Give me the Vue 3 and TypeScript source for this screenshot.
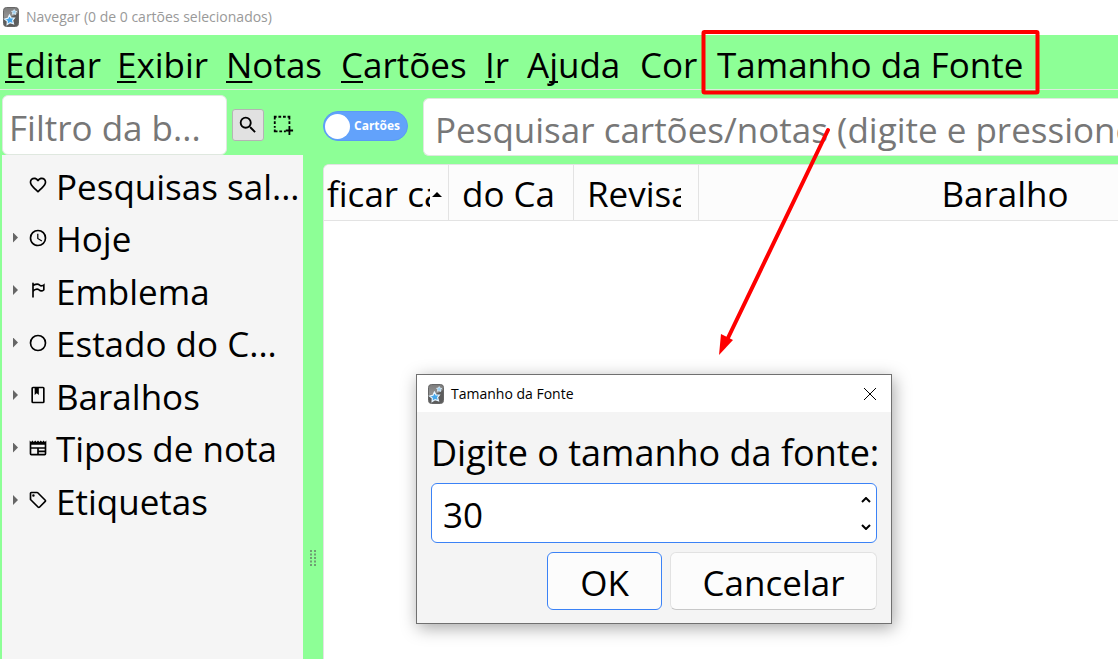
<script setup lang="ts">
import { ref } from 'vue'

interface MenuEntry {
  before: string
  key: string
  after: string
}

interface TreeRow {
  label: string
  icon: string
  expandable: boolean
}

const menus: MenuEntry[] = [
  { before: '', key: 'E', after: 'ditar' },
  { before: '', key: 'E', after: 'xibir' },
  { before: '', key: 'N', after: 'otas' },
  { before: '', key: 'C', after: 'artões' },
  { before: '', key: 'I', after: 'r' },
  { before: 'A', key: 'j', after: 'uda' },
  { before: 'Cor', key: '', after: '' },
  { before: 'Tamanho da Fonte', key: '', after: '' },
]

const rows: TreeRow[] = [
  {
    label: 'Pesquisas sal...',
    expandable: false,
    icon: 'M12.1,18.55L12,18.65L11.89,18.55C7.14,14.24 4,11.39 4,8.5C4,6.5 5.5,5 7.5,5C9.04,5 10.54,6 11.07,7.36H12.93C13.46,6 14.96,5 16.5,5C18.5,5 20,6.5 20,8.5C20,11.39 16.86,14.24 12.1,18.55M16.5,3C14.76,3 13.09,3.81 12,5.08C10.91,3.81 9.24,3 7.5,3C4.42,3 2,5.41 2,8.5C2,12.27 5.4,15.36 10.55,20.03L12,21.35L13.45,20.03C18.6,15.36 22,12.27 22,8.5C22,5.41 19.58,3 16.5,3Z',
  },
  {
    label: 'Hoje',
    expandable: true,
    icon: 'M12,20A8,8 0 0,0 20,12A8,8 0 0,0 12,4A8,8 0 0,0 4,12A8,8 0 0,0 12,20M12,2A10,10 0 0,1 22,12A10,10 0 0,1 12,22C6.47,22 2,17.5 2,12A10,10 0 0,1 12,2M12.5,7V12.25L17,14.92L16.25,16.15L11,13V7H12.5Z',
  },
  {
    label: 'Emblema',
    expandable: true,
    icon: 'M6,3A1,1 0 0,1 7,4V4.88C8.06,4.44 9.5,4 11,4C14,4 14,6 16,6C19,6 20,4 20,4V12C20,12 19,14 16,14C13,14 13,12 11,12C8,12 7,14 7,14V21H5V4A1,1 0 0,1 6,3M7,7.25V11.5C7,11.5 9,10 11,10C13,10 14,12 16,12C18,12 18,11 18,11V7.5C18,7.5 17,8 16,8C14,8 13,6 11,6C9,6 7,7.25 7,7.25Z',
  },
  {
    label: 'Estado do C...',
    expandable: true,
    icon: 'M12,20A8,8 0 0,1 4,12A8,8 0 0,1 12,4A8,8 0 0,1 20,12A8,8 0 0,1 12,20M12,2A10,10 0 0,0 2,12A10,10 0 0,0 12,22A10,10 0 0,0 22,12A10,10 0 0,0 12,2Z',
  },
  {
    label: 'Baralhos',
    expandable: true,
    icon: 'M18,2A2,2 0 0,1 20,4V20A2,2 0 0,1 18,22H6A2,2 0 0,1 4,20V4A2,2 0 0,1 6,2H18M18,4H13V12L10.5,9.75L8,12V4H6V20H18V4Z',
  },
  {
    label: 'Tipos de nota',
    expandable: true,
    icon: 'M2,3L3.67,4.67L5.33,3L7,4.67L8.67,3L10.33,4.67L12,3L13.67,4.67L15.33,3L17,4.67L18.67,3L20.33,4.67L22,3V19A2,2 0 0,1 20,21H4A2,2 0 0,1 2,19V3M11,19V13H4V19H11M20,19V17H13V19H20M20,15V13H13V15H20M20,11V8H4V11H20Z',
  },
  {
    label: 'Etiquetas',
    expandable: true,
    icon: 'M21.41,11.58L12.41,2.58A2,2 0 0,0 11,2H4A2,2 0 0,0 2,4V11A2,2 0 0,0 2.59,12.42L11.59,21.42A2,2 0 0,0 13,22A2,2 0 0,0 14.41,21.41L21.41,14.41A2,2 0 0,0 22,13A2,2 0 0,0 21.41,11.58M13,20L4,11V4H11L20,13M6.5,5A1.5,1.5 0 1,1 5,6.5A1.5,1.5 0 0,1 6.5,5Z',
  },
]

const size = ref('30')
const step = (delta: number): void => {
  size.value = String(Number(size.value) + delta)
}
</script>

<template>
  <div class="window">
    <svg class="defs" width="0" height="0" aria-hidden="true">
      <defs>
        <linearGradient id="tile" x1="0" y1="0" x2="0" y2="1">
          <stop offset="0" stop-color="#7c7c7c" />
          <stop offset="0.45" stop-color="#929292" />
          <stop offset="1" stop-color="#858585" />
        </linearGradient>
        <symbol id="app-icon" viewBox="0 0 16 20">
          <rect x="0.5" y="0.5" width="15" height="19" rx="3" fill="url(#tile)" stroke="#666" />
          <path d="M1 11C6 11 11 9 15 6V16Q15 19 13 19H3Q1 19 1 16Z" fill="#5c5c5c" />
          <path d="M6.4 8L8 10.8L11.4 11L9.6 13.4L10.5 16.8L7.2 15.6L4.1 17.6L4.3 14.2L1.6 12.1L5 11.2Z" fill="#46a8ec" stroke="#e8f5ff" stroke-width="1.2" />
          <path d="M11.2 2.6L12.1 4.2L13.8 4.5L12.5 5.7L12.7 7.5L11 6.7L9.4 7.3L9.7 5.6L8.6 4.2L10.4 4.1Z" fill="#9ad0f2" stroke="#dff0fb" stroke-width="0.8" />
        </symbol>
      </defs>
    </svg>

    <header class="titlebar">
      <svg class="app-icon" aria-hidden="true"><use href="#app-icon" /></svg>
      <span>Navegar (0 de 0 cartões selecionados)</span>
    </header>

    <nav class="menubar">
      <button v-for="m in menus" :key="m.before + m.key + m.after" type="button" class="menu">{{ m.before }}<span class="mnemonic">{{ m.key }}</span>{{ m.after }}</button>
    </nav>

    <div class="body">
      <aside class="sidebar">
        <div class="sidebar-tools">
          <input class="filter" type="text" placeholder="Filtro da b..." aria-label="Filtro da barra lateral" />
          <button type="button" class="tool active" aria-label="Pesquisar">
            <svg viewBox="0 0 24 24" aria-hidden="true">
              <path d="M9.5,3A6.5,6.5 0 0,1 16,9.5C16,11.11 15.41,12.59 14.44,13.73L14.71,14H15.5L20.5,19L19,20.5L14,15.5V14.71L13.73,14.44C12.59,15.41 11.11,16 9.5,16A6.5,6.5 0 0,1 3,9.5A6.5,6.5 0 0,1 9.5,3M9.5,5C7,5 5,7 5,9.5C5,12 7,14 9.5,14C12,14 14,12 14,9.5C14,7 12,5 9.5,5Z" />
            </svg>
          </button>
          <button type="button" class="tool" aria-label="Selecionar">
            <svg viewBox="0 0 24 24" aria-hidden="true">
              <path d="M2 2H5V4H4V6H2ZM7 2H10V4H7ZM12 2H15V4H12ZM17 2H20V6H18V4H17ZM2 8H4V11H2ZM18 8H20V11H18ZM2 13H4V15H2ZM2 17H4V18H6V20H2ZM8 18H11V20H8ZM13 18H15V20H13ZM18 13H20V17H23V19H20V23H18V19H15V17H18Z" />
            </svg>
          </button>
        </div>
        <ul class="tree">
          <li v-for="r in rows" :key="r.label" class="row">
            <span class="arrow" :class="{ shown: r.expandable }"></span>
            <svg class="row-icon" viewBox="0 0 24 24" aria-hidden="true"><path :d="r.icon" fill-rule="evenodd" /></svg>
            <span class="row-label">{{ r.label }}</span>
          </li>
        </ul>
      </aside>

      <div class="splitter">
        <svg class="grip" viewBox="0 0 6 16" aria-hidden="true">
          <path d="M0 0h2v2h-2zM4 0h2v2h-2zM0 3.5h2v2h-2zM4 3.5h2v2h-2zM0 7h2v2h-2zM4 7h2v2h-2zM0 10.5h2v2h-2zM4 10.5h2v2h-2zM0 14h2v2h-2zM4 14h2v2h-2z" fill="#6f9f72" />
        </svg>
      </div>

      <main class="content">
        <div class="search-bar">
          <label class="switch">
            <input type="checkbox" role="switch" />
            <span class="knob"></span>
            <span>Cartões</span>
          </label>
          <input class="search" type="text" placeholder="Pesquisar cartões/notas (digite e pressione Enter)" aria-label="Pesquisar cartões" />
        </div>
        <div class="table-area">
          <table class="cards">
            <colgroup>
              <col class="narrow" />
              <col class="narrow" />
              <col class="narrow" />
              <col class="wide" />
            </colgroup>
            <thead>
              <tr>
                <th>
                  <div class="head sorted">
                    <span class="clip">ficar ca</span>
                    <svg class="sort" viewBox="0 0 10 5" aria-hidden="true"><path d="M5 0L10 5H0Z" /></svg>
                  </div>
                </th>
                <th><div class="head"><span class="clip">do Ca</span></div></th>
                <th><div class="head"><span class="clip">Revisa</span></div></th>
                <th>Baralho</th>
              </tr>
            </thead>
          </table>
        </div>
      </main>
    </div>

    <section class="dialog" role="dialog" aria-labelledby="dialog-title">
      <header class="dialog-title">
        <svg class="app-icon" aria-hidden="true"><use href="#app-icon" /></svg>
        <span id="dialog-title">Tamanho da Fonte</span>
        <button type="button" class="close" aria-label="Fechar">
          <svg viewBox="0 0 14 14" aria-hidden="true"><path d="M1 1L13 13M13 1L1 13" /></svg>
        </button>
      </header>
      <form class="dialog-body" @submit.prevent>
        <label for="font-size">Digite o tamanho da fonte:</label>
        <div class="spin">
          <input id="font-size" v-model="size" type="text" inputmode="numeric" />
          <div class="steps">
            <button type="button" aria-label="Aumentar" @click="step(1)">
              <svg viewBox="0 0 10 6" aria-hidden="true"><path d="M1 5L5 1L9 5" /></svg>
            </button>
            <button type="button" aria-label="Diminuir" @click="step(-1)">
              <svg viewBox="0 0 10 6" aria-hidden="true"><path d="M1 1L5 5L9 1" /></svg>
            </button>
          </div>
        </div>
        <div class="actions">
          <button type="submit" class="btn primary">OK</button>
          <button type="button" class="btn">Cancelar</button>
        </div>
      </form>
    </section>

    <svg class="marks" width="360" height="340" viewBox="0 0 360 340" aria-hidden="true">
      <rect x="3.5" y="4" width="334" height="60.5" rx="1" fill="none" stroke="#fe0000" stroke-width="4" />
      <path d="M128 102L27 312" stroke="#fe0000" stroke-width="4" stroke-linecap="round" />
      <path d="M19 327L21 306L27 309L33 312Z" fill="#fe0000" />
    </svg>
  </div>
</template>

<style>
html,
body {
  overflow: hidden;
}
</style>

<style scoped>
.window {
  position: relative;
  display: flex;
  flex-direction: column;
  height: 100vh;
  overflow: hidden;
  background: #8dff96;
  color: #000;
  font-family: 'Open Sans', 'Noto Sans', sans-serif;
  font-size: 35px;
  line-height: 52px;
}

.window *,
.window *::before {
  box-sizing: border-box;
}

button,
input {
  margin: 0;
  padding: 0;
  border: 0;
  background: none;
  color: inherit;
  font: inherit;
}

.defs {
  position: absolute;
}

.titlebar {
  display: flex;
  flex: none;
  align-items: center;
  gap: 7px;
  height: 35px;
  padding: 0 3px 2px;
  background: #fff;
  color: #999;
  font-size: 14px;
  line-height: 20px;
}

.app-icon {
  flex: none;
  width: 16px;
  height: 20px;
}

.menubar {
  display: grid;
  flex: none;
  grid-template-columns: 112px 109px 115px 144px 42px 113px 77px auto;
  justify-content: start;
  height: 55px;
  padding: 4px 0 0 5px;
  border-bottom: 1px solid #dcebdc;
}

.menu {
  height: 52px;
  text-align: left;
  white-space: nowrap;
}

.mnemonic {
  text-decoration: underline;
  text-decoration-thickness: 2px;
  text-underline-offset: 3px;
  text-decoration-skip-ink: none;
}

.body {
  display: flex;
  flex: 1;
  min-height: 0;
}

.sidebar {
  display: flex;
  flex: none;
  flex-direction: column;
  width: 303px;
  padding: 5px 0 0 2px;
}

.sidebar-tools {
  display: flex;
  align-items: center;
  gap: 5px;
}

.filter {
  width: 225px;
  height: 60px;
  padding: 4px 6px 0;
  border: 1px solid #dfe8df;
  border-radius: 6px;
  background: #fff;
}

.filter::placeholder,
.search::placeholder {
  color: #777;
  opacity: 1;
}

.tool {
  display: flex;
  align-items: center;
  justify-content: center;
  width: 32px;
  height: 32px;
  border-radius: 3px;
}

.tool + .tool {
  margin-left: -2px;
}

.tool.active {
  border: 1px solid #b4b4b4;
  background: #e1e1e1;
}

.tool svg {
  width: 22px;
  height: 22px;
}

.tree {
  flex: 1;
  margin: 0;
  padding: 4px 0 0;
  background: #f5f5f5;
  list-style: none;
}

.row {
  display: flex;
  align-items: center;
  height: 52px;
  padding-left: 11px;
  white-space: nowrap;
}

.row:nth-child(even) {
  height: 53px;
}

.row-label {
  padding-top: 3px;
}

.arrow {
  flex: none;
  width: 5px;
  height: 10px;
  margin-right: 10px;
}

.arrow.shown {
  background: #666;
  clip-path: polygon(0 0, 100% 50%, 0 100%);
}

.row-icon {
  flex: none;
  width: 20px;
  height: 20px;
  margin-right: 8px;
}

.splitter {
  flex: none;
  width: 20px;
  padding: 460px 0 0 7px;
}

.grip {
  display: block;
  width: 6px;
  height: 16px;
}

.content {
  display: flex;
  flex: 1;
  flex-direction: column;
  min-width: 0;
}

.search-bar {
  display: flex;
  align-items: center;
  gap: 15px;
  padding: 8px 0;
}

.switch {
  display: flex;
  flex: none;
  align-items: center;
  gap: 4px;
  width: 85px;
  height: 30px;
  margin-bottom: 2px;
  padding: 0 1px;
  border: 1px solid #5a9bf5;
  border-radius: 15px;
  background: #62a2fb;
  color: #fff;
  font-size: 12px;
  font-weight: 700;
  line-height: 16px;
}

.switch input {
  position: absolute;
  opacity: 0;
}

.knob {
  width: 25px;
  height: 25px;
  border-radius: 50%;
  background: #fff;
}

.search {
  flex: 1;
  min-width: 0;
  height: 58px;
  padding: 4px 0 0 11px;
  border: 1px solid #dfe8df;
  border-right: 0;
  border-radius: 6px 0 0 6px;
  background: #fff;
}

.table-area {
  flex: 1;
  overflow: hidden;
  border: 1px solid #e3e3e3;
  border-right: 0;
  border-bottom: 0;
  border-radius: 6px 0 0 0;
  background: #fff;
}

.cards {
  width: 988px;
  border-collapse: separate;
  border-spacing: 0;
  table-layout: fixed;
}

.narrow {
  width: 125px;
}

.wide {
  width: auto;
}

.cards th {
  height: 56px;
  padding: 3px 0 0;
  border-right: 1px solid #e3e3e3;
  border-bottom: 1px solid #e3e3e3;
  background: #fcfcfc;
  font-weight: 400;
}

.head {
  display: flex;
  align-items: center;
  padding-left: 13px;
}

.head.sorted {
  gap: 2px;
  padding-left: 3px;
}

.clip {
  width: 94px;
  overflow: hidden;
  text-align: left;
  white-space: nowrap;
}

.sorted .clip {
  width: 103px;
}

.sort {
  width: 10px;
  height: 5px;
}

.dialog {
  position: absolute;
  top: 374px;
  left: 416px;
  width: 476px;
  border: 1px solid #707070;
  background: #f4f4f4;
  box-shadow: 2px 4px 16px rgba(0, 0, 0, 0.35);
}

.dialog-title {
  display: flex;
  align-items: center;
  gap: 7px;
  height: 37px;
  padding: 0 14px 0 11px;
  background: #fff;
  font-size: 14px;
  line-height: 20px;
}

.close {
  width: 14px;
  height: 14px;
  margin-left: auto;
}

.close svg {
  display: block;
  fill: none;
  stroke: #000;
}

.dialog-body {
  display: flex;
  flex-direction: column;
  padding: 15px 14px 13px;
}

.dialog-body label {
  height: 56px;
  font-size: 36px;
  line-height: 52px;
  white-space: nowrap;
}

.spin {
  display: flex;
  height: 60px;
  border: 1px solid #3b82f6;
  border-radius: 6px;
  background: #fff;
}

.spin input {
  flex: 1;
  min-width: 0;
  padding: 4px 0 0 11px;
  outline: 0;
}

.steps {
  display: flex;
  flex-direction: column;
  width: 20px;
  padding: 2px 0;
}

.steps button {
  display: flex;
  flex: 1;
  align-items: center;
  justify-content: center;
}

.steps svg {
  width: 10px;
  height: 6px;
  fill: none;
  stroke: #000;
  stroke-width: 2;
}

.actions {
  display: flex;
  justify-content: flex-end;
  gap: 8px;
  margin-top: 9px;
}

.btn {
  width: 207px;
  height: 58px;
  padding-top: 3px;
  border: 1px solid #e2e2e2;
  border-bottom-color: #c8c8c8;
  border-radius: 6px;
  background: #fcfcfc;
}

.btn.primary {
  width: 115px;
  border-color: #3b82f6;
}

.marks {
  position: absolute;
  top: 28px;
  left: 700px;
  fill: none;
  pointer-events: none;
}
</style>
